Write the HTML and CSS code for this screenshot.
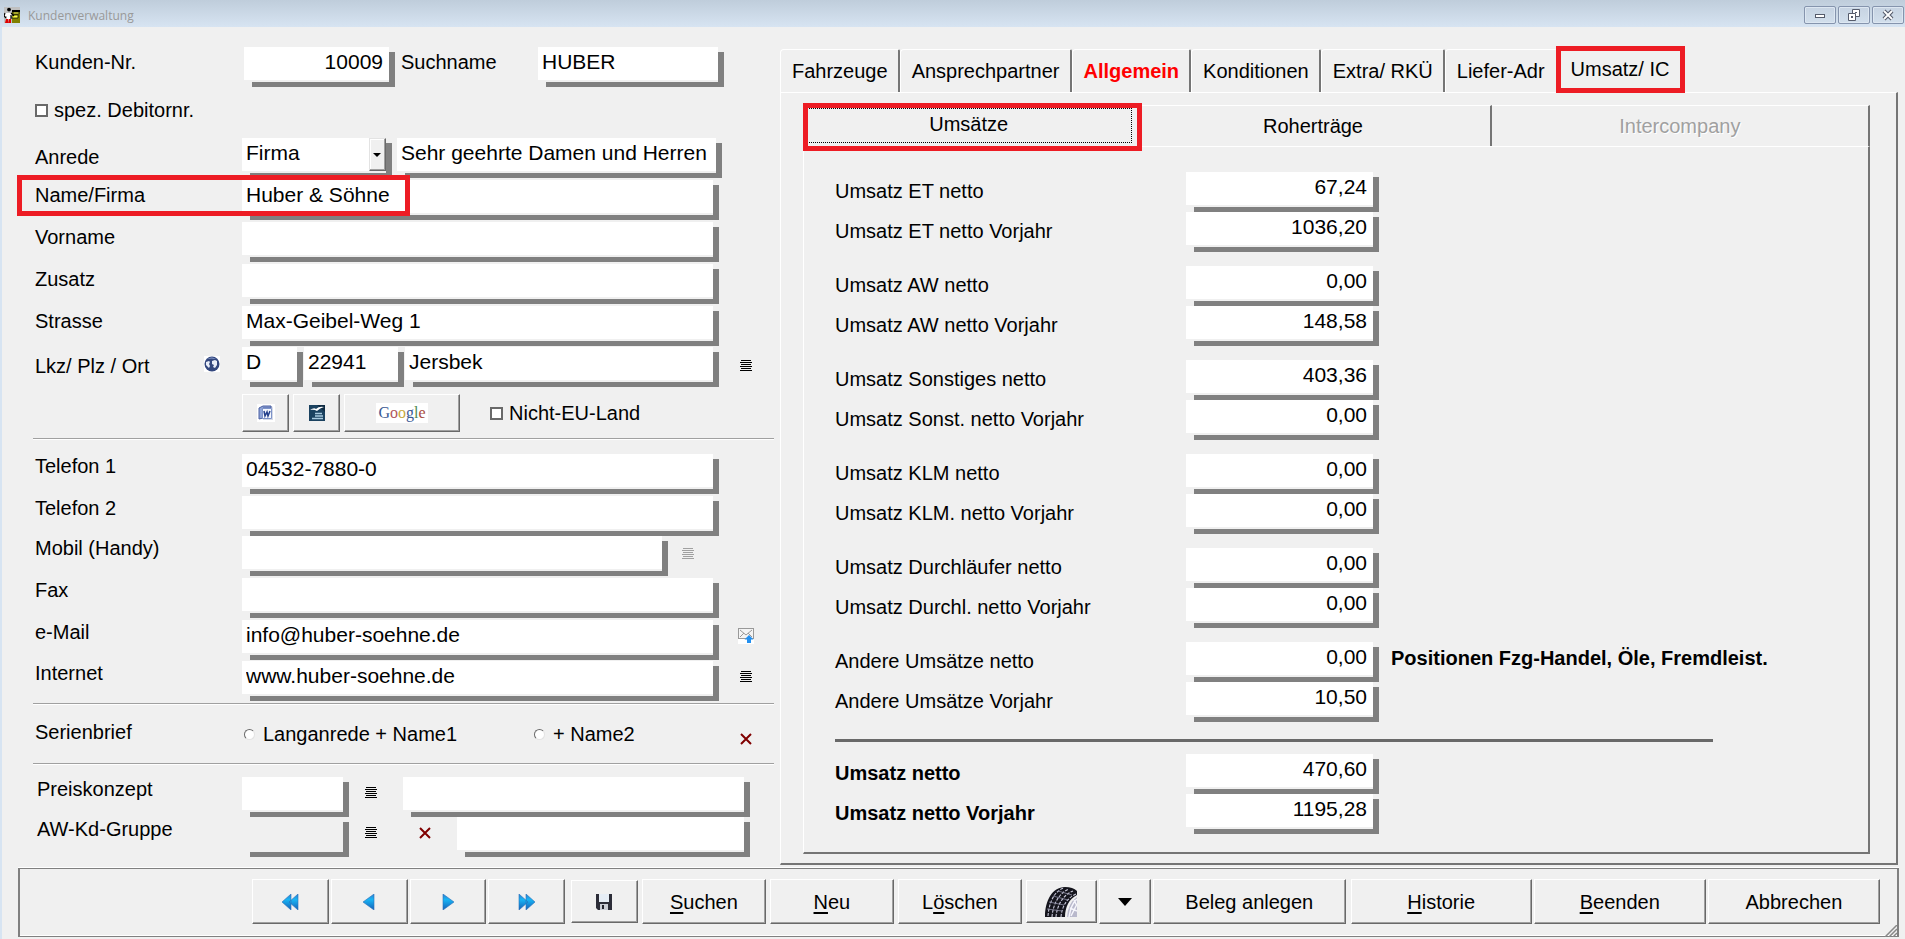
FILE: index.html
```html
<!DOCTYPE html>
<html lang="de">
<head>
<meta charset="utf-8">
<title>Kundenverwaltung</title>
<link rel="stylesheet" href="styles.css">
</head>
<body>
<svg class="defs" aria-hidden="true">
  <symbol id="list" viewBox="0 0 12 12"><path d="M1 .5h10M0 2.5h12M1 4.5h10M0 6.5h12M1 8.5h10M0 10.5h12" stroke="currentColor"/></symbol>
  <symbol id="cross" viewBox="0 0 12 12"><path d="M1 1l10 10M11 1L1 11" stroke="#800000" stroke-width="2"/></symbol>
  <linearGradient id="blue" x1="0" y1="0" x2="0" y2="1"><stop offset="0" stop-color="#2f80d0"/><stop offset=".35" stop-color="#18b4f4"/><stop offset="1" stop-color="#1560b8"/></linearGradient>
</svg>
<div class="window">
  <header class="titlebar">
    <svg width="16" height="16" viewBox="0 0 16 16"><rect width="16" height="16" fill="#c0c0c0"/><path d="M8 4h8v12H8z" fill="#808000"/><path d="M8 3h8v2H8z"/><path d="M9 5h6v2H9zM8 8h6v3H8z" fill="#ffff40" stroke="#000" stroke-width=".7"/><circle cx="5" cy="2.600" r="1.900" fill="#000"/><path d="M1 6h7v3H1zM3 6h4v6H3z" fill="#fff"/><path d="M1 6L0 9l2 2M7 6l3 3M7 8v4" stroke="#000" stroke-width="1.200" fill="none"/><path d="M2 12h2v4H1zM5 12h2v4H4z" fill="#e00000"/></svg>
    <h1>Kundenverwaltung</h1>
    <button class="winbtn" aria-label="Minimieren"><svg width="12" height="12"><rect x="1.500" y="5.500" width="9" height="3" fill="#fff" stroke="#555b6b"/></svg></button>
    <button class="winbtn" aria-label="Wiederherstellen"><svg width="12" height="12"><path d="M4.500.500h7v7h-7z" fill="#fff" stroke="#555b6b"/><path d="M.500 4.500h7v7h-7z" fill="#fff" stroke="#555b6b"/><path d="M3 7h2v2H3zM7 3h2v1H7z" fill="#555b6b"/></svg></button>
    <button class="winbtn" aria-label="Schließen"><svg width="12" height="12"><path d="M2 2l8 8M10 2L2 10" stroke="#555b6b" stroke-width="4"/><path d="M2 2l8 8M10 2L2 10" stroke="#fff" stroke-width="1.800"/></svg></button>
  </header>

  <main class="main">
    <form class="customer">
      <div class="row head-row">
        <label for="nr">Kunden-Nr.</label>
        <div class="cells nr-cells">
          <span class="field"><input id="nr" class="num" value="10009"></span>
          <label for="such">Suchname</label>
          <span class="field"><input id="such" value="HUBER"></span>
        </div>
      </div>
      <label class="check debitor"><input type="checkbox">spez. Debitornr.</label>
      <div class="address">
        <div class="row salutation">
          <label for="anrede">Anrede</label>
          <div class="cells anrede-cells">
            <span class="field combo"><select id="anrede"><option>Firma</option></select></span>
            <span class="field"><input aria-label="Briefanrede" value="Sehr geehrte Damen und Herren"></span>
          </div>
        </div>
        <div class="row marked"><label for="name">Name/Firma</label><span class="field"><input id="name" value="Huber &amp; Söhne"></span></div>
        <div class="row"><label for="vor">Vorname</label><span class="field"><input id="vor"></span></div>
        <div class="row"><label for="zus">Zusatz</label><span class="field"><input id="zus"></span></div>
        <div class="row"><label for="str">Strasse</label><span class="field"><input id="str" value="Max-Geibel-Weg 1"></span></div>
        <div class="row salutation">
          <label for="lkz">Lkz/ Plz / Ort
            <svg class="globe" width="16" height="16" viewBox="0 0 16 16"><rect width="16" height="16" fill="#fff"/><circle cx="8" cy="8" r="7.500" fill="#33477e"/><path d="M3 3q5-3 9 0-5-1-9 0z" fill="#8ea2cf"/><path d="M2 6l3-1 1 1-1 2 1 2-1 2-3-3zM8 5l3-1 2 1v4l-2 3-2-1 1-2-2-1z" fill="#e8edf8"/></svg>
          </label>
          <div class="cells ort-cells">
            <span class="field"><input id="lkz" value="D"></span>
            <span class="field"><input aria-label="Plz" value="22941"></span>
            <span class="field"><input aria-label="Ort" value="Jersbek"></span>
          </div>
          <button type="button" class="icon" aria-label="Ortsliste"><svg width="12" height="12"><use href="#list"/></svg></button>
        </div>
      </div>
      <div class="tools">
        <button type="button" class="btn" aria-label="Word"><svg width="18" height="18" viewBox="0 0 18 18"><rect width="18" height="18" fill="#fff"/><path d="M5 2h10l1 2v12H6z" fill="#d5dae6"/><path d="M2 4l4-2h8v2H6v10l-4 1z" fill="#8fa5d8" stroke="#4a5fa0"/><path d="M5.500 4.500h9v10h-9z" fill="#f4f7fd" stroke="#7d93c9"/><path d="M7 7l1 5 2-4 1 4 2-5" fill="none" stroke="#24408c" stroke-width="1.500"/></svg></button>
        <button type="button" class="btn" aria-label="Writer"><svg width="16" height="16" viewBox="0 0 16 16"><rect width="16" height="16" fill="#1b4260"/><path d="M8 0h8v7z" fill="#0e2a42"/><path d="M1 5q4-3 6-1 3-3 8-2-4 1-7 4-3-2-7-1z" fill="#fff"/><path d="M6 8.500h7M6 11h8M3 13.500h11" stroke="#a9cbe0" stroke-width="1.300"/></svg></button>
        <button type="button" class="btn" aria-label="Google Maps"><span class="google"><i class="g1">G</i><i class="g2">o</i><i class="g3">o</i><i class="g1">g</i><i class="g4">l</i><i class="g5">e</i></span></button>
        <label class="check"><input type="checkbox">Nicht-EU-Land</label>
      </div>
      <hr>
      <div class="contact">
        <div class="row"><label for="t1">Telefon 1</label><span class="field"><input id="t1" value="04532-7880-0"></span></div>
        <div class="row"><label for="t2">Telefon 2</label><span class="field"><input id="t2"></span></div>
        <div class="row"><label for="mob">Mobil (Handy)</label>
          <div class="cells mobil-cells"><span class="field"><input id="mob"></span><button type="button" class="icon off" disabled aria-label="Mobilliste"><svg width="12" height="12"><use href="#list"/></svg></button></div></div>
        <div class="row"><label for="fax">Fax</label><span class="field"><input id="fax"></span></div>
        <div class="row"><label for="mail">e-Mail</label><span class="field"><input id="mail" value="info@huber-soehne.de"></span>
          <button type="button" class="icon" aria-label="E-Mail senden"><svg width="16" height="16" viewBox="0 0 16 16"><rect y="8" width="16" height="8" fill="#fff"/><rect x=".5" y=".5" width="15" height="10" fill="#f4f4f4" stroke="#999"/><path d="M2 2l6 5 6-5M2 9l4-4M14 9l-4-4" fill="none" stroke="#999"/><path d="M11 7l4.500 4.500H13V15H9v-3.500H6.500z" fill="#2390f0"/></svg></button></div>
        <div class="row"><label for="web">Internet</label><span class="field"><input id="web" value="www.huber-soehne.de"></span>
          <button type="button" class="icon" aria-label="Internetliste"><svg width="12" height="12"><use href="#list"/></svg></button></div>
      </div>
      <hr>
      <div class="serial" role="radiogroup" aria-label="Serienbrief">
        <span class="serial-title">Serienbrief</span>
        <label class="radio"><input type="radio" name="serie">Langanrede + Name1</label>
        <label class="radio"><input type="radio" name="serie">+ Name2</label>
        <button type="button" class="icon" aria-label="Serienbrief löschen"><svg width="12" height="12"><use href="#cross"/></svg></button>
      </div>
      <hr>
      <div class="groups">
        <label for="pk">Preiskonzept</label>
        <span class="field"><input id="pk"></span>
        <button type="button" class="icon" aria-label="Preiskonzepte"><svg width="12" height="12"><use href="#list"/></svg></button>
        <span class="field wide"><input aria-label="Preiskonzept Name"></span>
        <label for="aw">AW-Kd-Gruppe</label>
        <span class="field"><input id="aw" disabled></span>
        <button type="button" class="icon" aria-label="Kundengruppen"><svg width="12" height="12"><use href="#list"/></svg></button>
        <button type="button" class="icon" aria-label="Gruppe löschen"><svg width="12" height="12"><use href="#cross"/></svg></button>
        <span class="field"><input aria-label="Gruppe Name"></span>
      </div>
    </form>

    <section class="book">
      <div class="tabs" role="tablist">
        <button role="tab">Fahrzeuge</button><button role="tab">Ansprechpartner</button><button role="tab" class="alert">Allgemein</button><button role="tab">Konditionen</button><button role="tab">Extra/ RKÜ</button><button role="tab" class="before">Liefer-Adr</button><button role="tab" class="current" aria-selected="true">Umsatz/ IC</button>
      </div>
      <div class="page">
        <div class="subtabs" role="tablist">
          <button role="tab" class="current" aria-selected="true">Umsätze</button><button role="tab">Roherträge</button><button role="tab" disabled>Intercompany</button>
        </div>
        <div class="sheet">
          <div class="pair">
            <label for="u1">Umsatz ET netto</label><span class="field"><input id="u1" class="num" value="67,24"></span>
            <label for="u2">Umsatz ET netto Vorjahr</label><span class="field"><input id="u2" class="num" value="1036,20"></span>
          </div>
          <div class="pair">
            <label for="u3">Umsatz AW netto</label><span class="field"><input id="u3" class="num" value="0,00"></span>
            <label for="u4">Umsatz AW netto Vorjahr</label><span class="field"><input id="u4" class="num" value="148,58"></span>
          </div>
          <div class="pair">
            <label for="u5">Umsatz Sonstiges netto</label><span class="field"><input id="u5" class="num" value="403,36"></span>
            <label for="u6">Umsatz Sonst. netto Vorjahr</label><span class="field"><input id="u6" class="num" value="0,00"></span>
          </div>
          <div class="pair">
            <label for="u7">Umsatz KLM netto</label><span class="field"><input id="u7" class="num" value="0,00"></span>
            <label for="u8">Umsatz KLM. netto Vorjahr</label><span class="field"><input id="u8" class="num" value="0,00"></span>
          </div>
          <div class="pair">
            <label for="u9">Umsatz Durchläufer netto</label><span class="field"><input id="u9" class="num" value="0,00"></span>
            <label for="u10">Umsatz Durchl. netto Vorjahr</label><span class="field"><input id="u10" class="num" value="0,00"></span>
          </div>
          <div class="pair">
            <label for="u11">Andere Umsätze netto</label><span class="field"><input id="u11" class="num" value="0,00"></span><strong>Positionen Fzg-Handel, Öle, Fremdleist.</strong>
            <label for="u12">Andere Umsätze Vorjahr</label><span class="field"><input id="u12" class="num" value="10,50"></span>
          </div>
          <hr class="sum">
          <div class="pair total">
            <label for="u13">Umsatz netto</label><span class="field"><input id="u13" class="num" value="470,60"></span>
            <label for="u14">Umsatz netto Vorjahr</label><span class="field"><input id="u14" class="num" value="1195,28"></span>
          </div>
        </div>
      </div>
    </section>
  </main>

  <footer class="bar">
    <button class="btn nav" aria-label="Erster"><svg width="18" height="16" viewBox="0 0 18 16"><path d="M10 0v16L1 8zM17 0v16L8 8z" fill="url(#blue)" stroke="#2a6fb8" stroke-width=".6"/></svg></button>
    <button class="btn nav" aria-label="Voriger"><svg width="18" height="16" viewBox="0 0 18 16"><path d="M14 0v16L3 8z" fill="url(#blue)" stroke="#2a6fb8" stroke-width=".6"/></svg></button>
    <button class="btn nav" aria-label="Nächster"><svg width="18" height="16" viewBox="0 0 18 16"><path d="M4 0v16l11-8z" fill="url(#blue)" stroke="#2a6fb8" stroke-width=".6"/></svg></button>
    <button class="btn nav" aria-label="Letzter"><svg width="18" height="16" viewBox="0 0 18 16"><path d="M1 0v16l9-8zM8 0v16l9-8z" fill="url(#blue)" stroke="#2a6fb8" stroke-width=".6"/></svg></button>
    <button class="btn save" aria-label="Speichern"><svg width="16" height="16" viewBox="0 0 16 16"><path d="M0 0h16v16H2l-2-2z" fill="#2c2d38"/><path d="M3 0h10v8H3z" fill="#e6edf5"/><path d="M4 10h8v6H4z" fill="#c9ccd4"/><path d="M6 11h2v4H6z" fill="#22232c"/></svg></button>
    <button class="btn cmd"><span><u>S</u>uchen</span></button>
    <button class="btn cmd"><span><u>N</u>eu</span></button>
    <button class="btn cmd"><span>L<u>ö</u>schen</span></button>
    <button class="btn tyre" aria-label="Reifen"><svg width="32" height="30" viewBox="0 0 32 30"><path d="M0 30C0 14 7 0 20 0q8 0 12 4v4C24 12 20 20 20 30z" fill="#15151d"/><path d="M32 10q-9 6-10 20h10z" fill="#b9b9cc"/><path d="M32 12q-6 5-8 18M32 17l-6 12M29 13l3 6M25 21l7 3" fill="none" stroke="#f6f6fc" stroke-width="1.500"/><path d="M3 29C4 16 9 4 19 1M7 30C8 17 14 6 24 2M11 30C12 18 18 8 28 4M16 30C17 19 22 11 31 7" fill="none" stroke="#c9c9da" stroke-width="1.100" stroke-dasharray="3 1.300"/><path d="M2 22l15 2M4 15l15 3M8 9l15 4M13 4l14 4" stroke="#8e8ea4" stroke-width=".8"/></svg></button>
    <button class="btn drop" aria-label="Auswahl"><svg width="14" height="8"><path d="M0 0h14L7 8z"/></svg></button>
    <button class="btn beleg">Beleg anlegen</button>
    <button class="btn hist"><span><u>H</u>istorie</span></button>
    <button class="btn end"><span><u>B</u>eenden</span></button>
    <button class="btn end">Abbrechen</button>
    <svg class="grip" width="12" height="12"><path d="M0 12L12 0M4 12l8-8M8 12l4-4" stroke="#888" stroke-width="1.500"/></svg>
  </footer>
</div>
</body>
</html>
```

FILE: styles.css
```css
*, *::before, *::after { box-sizing: border-box; }
body {
  margin: 0;
  background: #f0f0f0;
  color: #000;
  font: 20px/24px "Liberation Sans", Arial, sans-serif;
}
button, input, select { font: inherit; color: inherit; margin: 0; border-radius: 0; }
button { padding: 0; border: 0; background: none; white-space: nowrap; }
svg { display: block; flex: none; }
.defs { position: absolute; width: 0; height: 0; }

.window { display: flex; flex-direction: column; min-height: 100vh; border-left: 2px solid #d7e4f2; }

/* title bar */
.titlebar {
  display: flex;
  gap: 2px;
  height: 27px;
  margin-left: -2px;
  padding: 6px 1px 0 4px;
  background: linear-gradient(#bfcddb, #d7e4f2);
}
.titlebar > svg { margin-top: 1px; }
.titlebar h1 {
  flex: 1;
  margin: 0 0 0 6px;
  color: #999;
  font: 12px/20px "Open Sans", "Noto Sans", sans-serif;
}
.winbtn {
  display: flex;
  align-items: center;
  justify-content: center;
  width: 32px;
  height: 18px;
  border: 1px solid #8594ad;
  border-radius: 2px;
  background: linear-gradient(#c6d3e2, #d2dfec);
  box-shadow: inset 0 0 0 1px #dde7f2;
}

.main {
  flex: 1;
  display: grid;
  grid-template-columns: minmax(0, 778fr) minmax(0, 1125fr);
}

/* shared controls */
.field {
  display: block;
  height: 40px;
  padding: 0 6px 7px 0;
  background:
    linear-gradient(#808080, #808080) right bottom / calc(100% - 8px) 5px no-repeat,
    linear-gradient(#808080, #808080) right bottom / 6px calc(100% - 5px) no-repeat;
}
.field input, .field select {
  display: block;
  width: 100%;
  height: 33px;
  padding: 0 4px 3px;
  border: 0;
  background: #fff;
  font-size: 21px;
  outline: 0;
}
.field input:disabled { background: #f0f0f0; }
.field .num { padding-right: 6px; text-align: right; }
.combo { position: relative; }
.field select { appearance: none; }
.combo::before {
  content: "";
  position: absolute;
  top: 0;
  right: 6px;
  width: 17px;
  height: 33px;
  border: 1px solid;
  border-color: #e3e3e3 #696969 #696969 #e3e3e3;
  background: #f0f0f0;
  box-shadow: inset -1px -1px #a0a0a0, inset 1px 1px #fff;
}
.combo::after {
  content: "";
  position: absolute;
  top: 15px;
  right: 11px;
  border: 4px solid transparent;
  border-top-color: #000;
  border-bottom: 0;
}
.btn {
  display: flex;
  align-items: center;
  justify-content: center;
  border: 1px solid;
  border-color: #fff #696969 #696969 #fff;
  background: #f0f0f0;
  box-shadow: inset -1px -1px #a0a0a0;
}
.icon { display: flex; align-items: center; justify-content: center; }
.off { color: #a0a0a0; }
.check, .radio { display: flex; align-items: center; gap: 6px; }
.check input {
  appearance: none;
  width: 13px;
  height: 13px;
  border: 2px solid #696969;
  background: #fff;
}
.radio { gap: 8px; }
.radio input {
  appearance: none;
  width: 11px;
  height: 11px;
  border: 1px solid;
  border-color: #696969 #e3e3e3 #e3e3e3 #696969;
  border-radius: 50%;
  background: #fff;
}
hr { height: 2px; margin: 0; border: 0; border-top: 1px solid #a0a0a0; background: #fff; }

/* customer form */
.customer { padding: 20px 6px 0 31px; }
.row { position: relative; display: grid; grid-template-columns: 207px minmax(0, 1fr) 55px; padding-left: 2px; }
.row > label { line-height: 30px; }
.salutation > label { display: flex; justify-content: space-between; padding-right: 22px; line-height: 38px; }
.globe { margin-top: 9px; }
.row > .icon { height: 38px; padding-right: 1px; }
.cells { display: grid; }
.nr-cells { grid-template-columns: 151px 143px minmax(0, 186fr); margin: 0 -5px 0 2px; }
.nr-cells label { padding-left: 6px; line-height: 30px; }
.anrede-cells { grid-template-columns: 150px minmax(0, 1fr); gap: 5px; margin-right: -3px; }
.ort-cells { grid-template-columns: 61px 100px minmax(0, 1fr); gap: 1px; }
.mobil-cells { grid-template-columns: minmax(0, 1fr) 40px; margin-right: 11px; }
.mobil-cells .icon { height: 36px; }
.debitor { height: 46px; margin: 0 0 5px 2px; }
.address { display: grid; grid-template-rows: 42px 42px 42px 42px 41px 40px; }
.marked::after {
  content: "";
  position: absolute;
  top: -5px;
  left: -16px;
  width: 393px;
  height: 41px;
  border: 5px solid #ed1c24;
}
.tools { display: flex; gap: 4px; margin: 7px 0 6px 209px; }
.tools .btn { width: 47px; height: 38px; }
.tools .btn:nth-child(3) { width: 116px; }
.tools .check { margin-left: 26px; }
.google { padding: 0 2px; background: #fff; font: 16px/20px "Liberation Serif", serif; }
.google i { font-style: normal; }
.g1 { color: #3b5a94; }
.g2 { color: #b0555a; }
.g3 { color: #c7a83c; }
.g4 { color: #4f8a52; }
.g5 { color: #a84c40; }
.contact { display: grid; grid-template-rows: 42px 40px 42px 42px 41px 40px; margin: 14px 0 2px; }
.contact .row > label { line-height: 24px; }
.contact .row > .icon { height: 32px; }
.serial {
  display: grid;
  grid-template: 58px / 209px 290px minmax(0, 1fr) 55px;
  padding-left: 2px;
}
.serial-title { line-height: 54px; }
.serial .icon { height: 68px; padding-right: 1px; }
.groups {
  display: grid;
  grid-template-columns: 205px 107px 54px 54px minmax(0, 1fr);
  margin: 12px 24px 0 4px;
}
.groups label { line-height: 24px; }
.groups .icon { height: 32px; justify-content: flex-start; padding-left: 16px; }
.groups .wide { grid-column: 4 / 6; }

/* tab book */
.book { display: flex; flex-direction: column; margin: 22px 7px 0 0; }
.tabs { display: flex; height: 43px; }
.tabs button {
  padding: 0 10px 0 11px;
  border: solid;
  border-width: 1px 2px 0 1px;
  border-color: #fff #757575 #fff #fff;
  border-radius: 4px 2px 0 0;
}
.tabs .alert { color: #f00; font-weight: bold; }
.tabs .before { border-right-color: transparent; }
.tabs .current { position: relative; padding: 0 15px 5px 13px; background: #f0f0f0; border-color: transparent; }
.current::after {
  content: "";
  position: absolute;
  inset: -4px -1px -1px -2px;
  border: 5px solid #ed1c24;
}
.page {
  flex: 1;
  display: flex;
  flex-direction: column;
  padding: 12px 26px 9px 22px;
  border: 1px solid #fff;
  border-width: 1px 2px 2px 1px;
  border-right-color: #757575;
  border-bottom-color: #757575;
}
.subtabs { display: grid; grid-template-columns: 333fr 355fr 378fr; height: 41px; }
.subtabs button { border-top: 1px solid #fff; border-right: 2px solid #757575; }
.subtabs button:disabled { color: #a0a0a0; text-shadow: 1px 1px #fff; }
.subtabs .current { position: relative; padding-bottom: 5px; border-color: transparent; background: #f0f0f0; }
.subtabs .current::after { inset: -3px -8px -5px 0; }
.subtabs .current::before {
  content: "";
  position: absolute;
  inset: 2px 2px 3px 4px;
  border: 1px dotted #000;
}
.sheet {
  flex: 1;
  display: flex;
  flex-direction: column;
  padding: 25px 0 16px 31px;
  border: 1px solid #fff;
  border-width: 1px 2px 2px 1px;
  border-right-color: #757575;
  border-bottom-color: #757575;
}
.pair { display: grid; grid-template-columns: 351px 193px minmax(0, 1fr); grid-auto-rows: 40px; margin-bottom: 14px; }
.pair label { grid-column: 1; line-height: 38px; }
.pair strong { padding-left: 12px; line-height: 32px; }
.sum { width: 85%; height: 3px; margin: 3px 0 12px; border: 0; background: #696969; }
.total { margin: 0; font-weight: bold; }
.total input { font-weight: normal; }

/* command bar */
.bar {
  position: relative;
  display: flex;
  align-items: center;
  gap: 2px;
  height: 69px;
  margin: 3px 6px 2px 16px;
  padding: 0 17px 2px 232px;
  border: 2px solid #808080;
  border-width: 1px 2px;
  box-shadow: 0 -1px #fff, inset 0 -1px #fff;
}
.bar .btn { height: 45px; flex: 1 1 0; }
.bar .nav { flex-grow: 76; }
.bar .save { flex-grow: 66; height: 43px; margin-left: 4px; }
.bar .cmd { flex-grow: 124; margin-left: 2px; }
.bar .tyre { flex-grow: 70; height: 43px; margin-left: 2px; }
.bar .drop { flex-grow: 51; }
.bar .beleg { flex-grow: 194; }
.bar .hist { flex-grow: 182; margin-left: 3px; }
.bar .end { flex-grow: 173; }
.bar u { text-underline-offset: 3px; }
.grip { position: absolute; right: 0; bottom: -1px; }
```
